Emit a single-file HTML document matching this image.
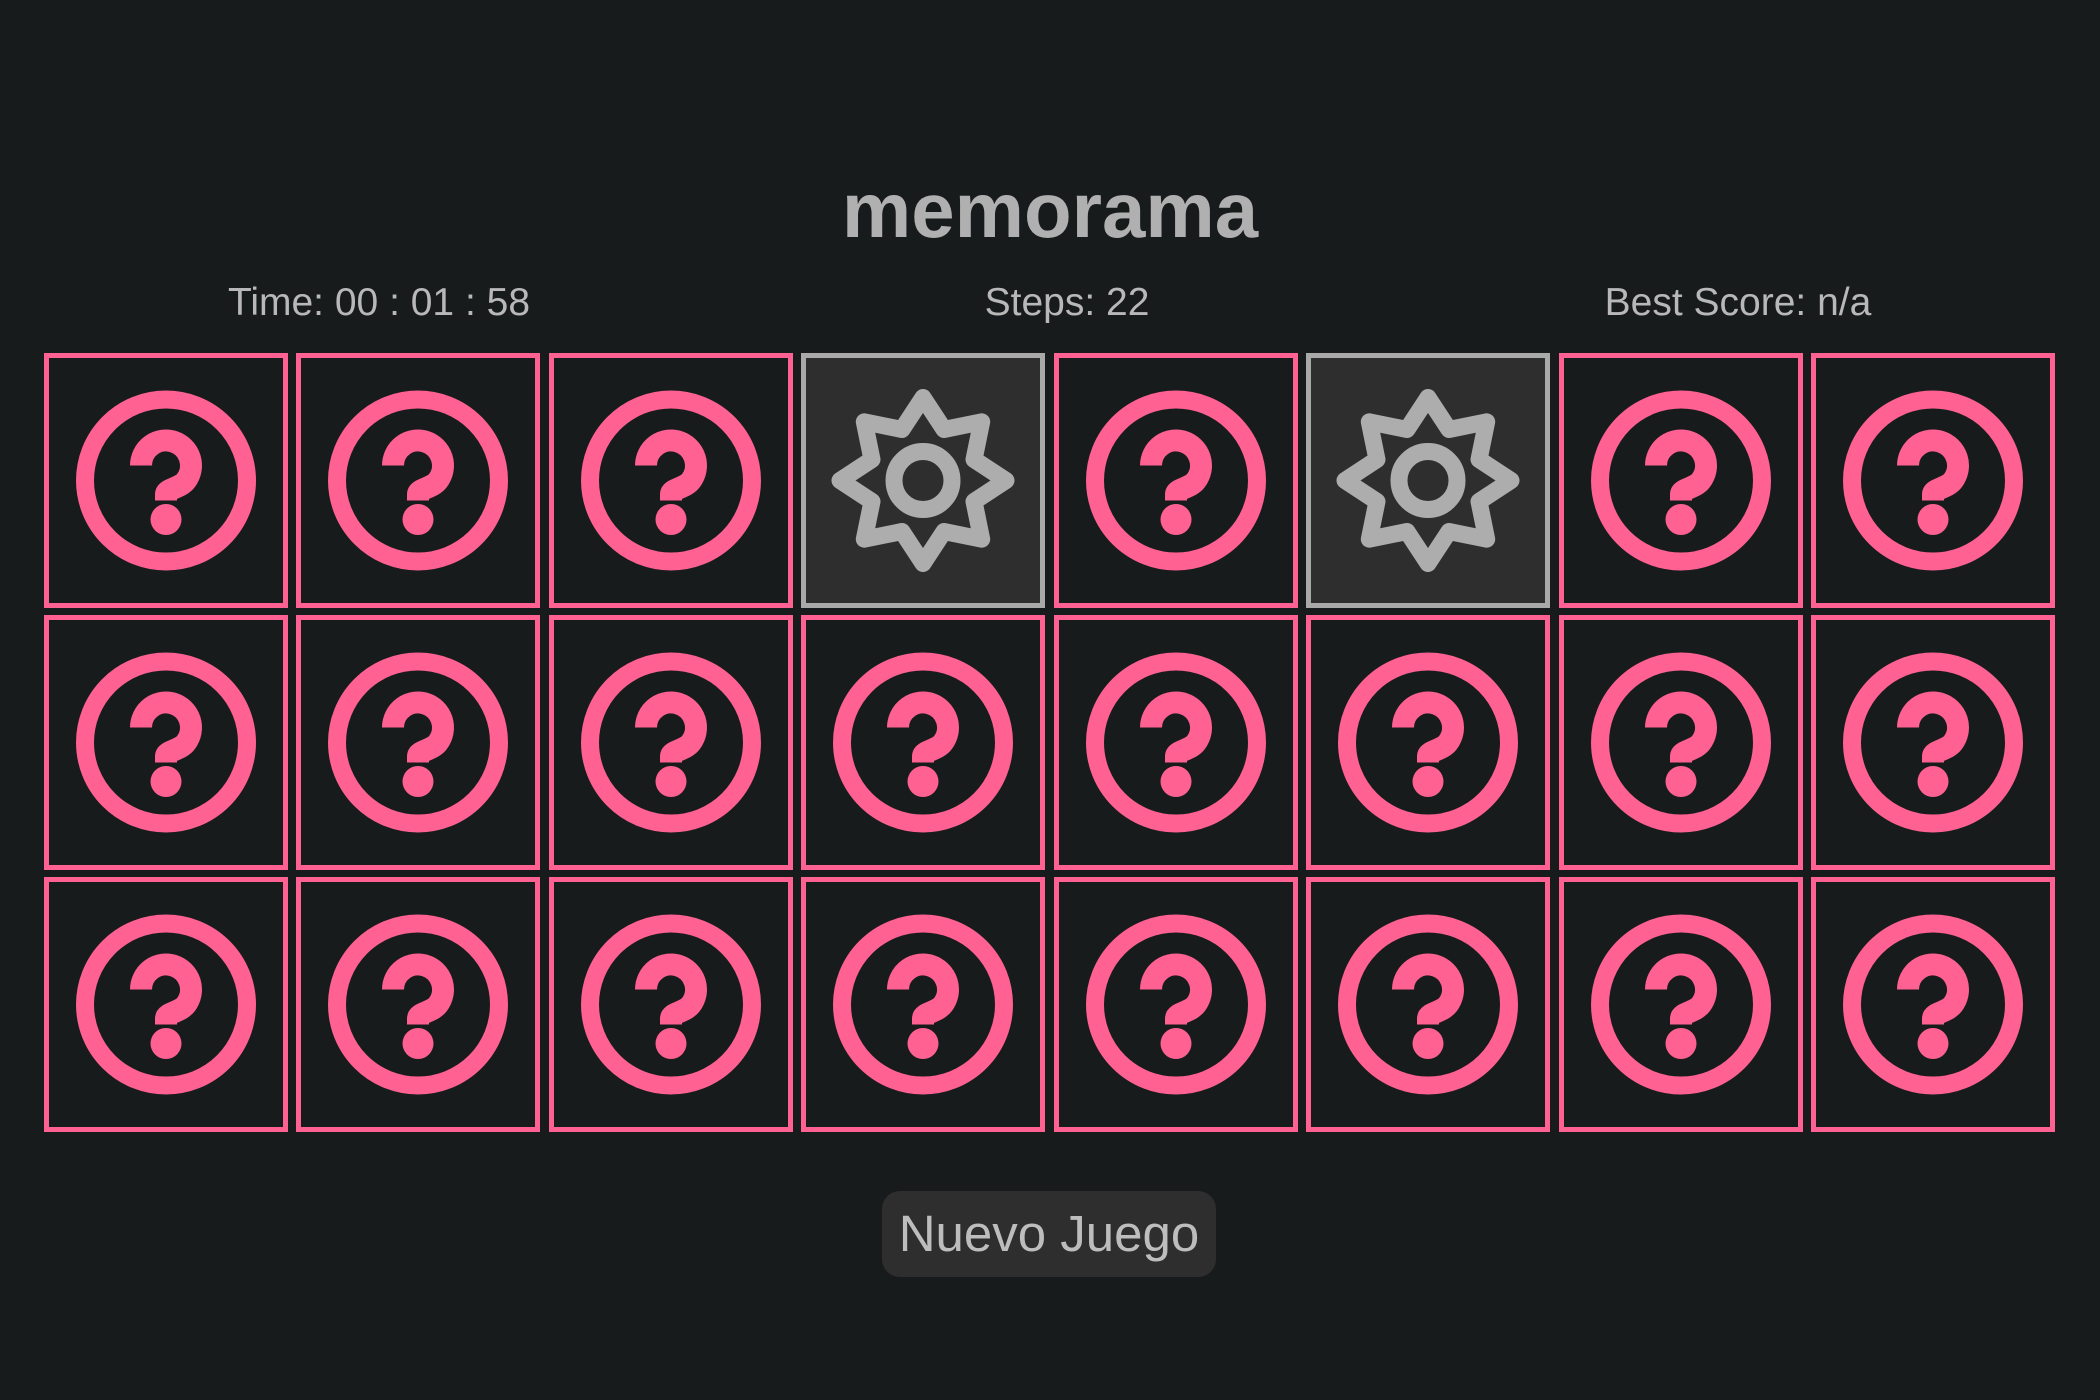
<!DOCTYPE html>
<html><head><meta charset="utf-8"><style>
html,body{margin:0;padding:0;background:#181b1c;width:2100px;height:1400px;overflow:hidden;font-family:"Liberation Sans",Arial,sans-serif;}
h1{position:absolute;left:0;width:2100px;top:160px;margin:0;text-align:center;font-size:78px;font-weight:bold;color:#b0b0b0;line-height:100px;}
.st{position:absolute;top:280px;font-size:39px;color:#b8b8b8;line-height:46px;width:600px;text-align:center;}
.card{position:absolute;width:244px;height:255px;box-sizing:border-box;border:5px solid #ff6192;background:#181b1c;}
.card svg{position:absolute;left:-5px;top:-5px;}
.card.open{border-color:#a9a9a9;background:#2e2e2e;}
.btn{position:absolute;left:882px;top:1191px;width:334px;height:86px;border-radius:18px;background:#2e2e2e;color:#bdbdbd;font-size:51px;line-height:86px;text-align:center;}
</style></head><body>
<svg width="0" height="0" style="position:absolute">
<defs>
<symbol id="q" viewBox="-122 -127.5 244 255">
<circle cx="0" cy="0" r="81" fill="none" stroke="#ff6192" stroke-width="18"/>
<path d="M-25,-15 A25,25 0 1 1 20,0 C14,8 0,8 0,14 L0,20" fill="none" stroke="#ff6192" stroke-width="22"/>
<circle cx="0" cy="39" r="15.5" fill="#ff6192"/>
</symbol>
<symbol id="g" viewBox="-122 -127.5 244 255">
<polygon points="0,-83 21,-51 58.7,-58.7 51,-21 83,0 51,21 58.7,58.7 21,51 0,83 -21,51 -58.7,58.7 -51,21 -83,0 -51,-21 -58.7,-58.7 -21,-51" fill="none" stroke="#adadad" stroke-width="17" stroke-linejoin="round"/>
<circle cx="0" cy="0" r="29" fill="none" stroke="#adadad" stroke-width="17"/>
</symbol>
</defs></svg>
<h1>memorama</h1>
<div class="st" style="left:79px">Time: 00 : 01 : 58</div>
<div class="st" style="left:767px">Steps: 22</div>
<div class="st" style="left:1438px">Best Score: n/a</div>

<div class="card" style="left:44px;top:353px"><svg width="244" height="255"><use href="#q"/></svg></div>
<div class="card" style="left:296px;top:353px"><svg width="244" height="255"><use href="#q"/></svg></div>
<div class="card" style="left:549px;top:353px"><svg width="244" height="255"><use href="#q"/></svg></div>
<div class="card open" style="left:801px;top:353px"><svg width="244" height="255"><use href="#g"/></svg></div>
<div class="card" style="left:1054px;top:353px"><svg width="244" height="255"><use href="#q"/></svg></div>
<div class="card open" style="left:1306px;top:353px"><svg width="244" height="255"><use href="#g"/></svg></div>
<div class="card" style="left:1559px;top:353px"><svg width="244" height="255"><use href="#q"/></svg></div>
<div class="card" style="left:1811px;top:353px"><svg width="244" height="255"><use href="#q"/></svg></div>

<div class="card" style="left:44px;top:615px"><svg width="244" height="255"><use href="#q"/></svg></div>
<div class="card" style="left:296px;top:615px"><svg width="244" height="255"><use href="#q"/></svg></div>
<div class="card" style="left:549px;top:615px"><svg width="244" height="255"><use href="#q"/></svg></div>
<div class="card" style="left:801px;top:615px"><svg width="244" height="255"><use href="#q"/></svg></div>
<div class="card" style="left:1054px;top:615px"><svg width="244" height="255"><use href="#q"/></svg></div>
<div class="card" style="left:1306px;top:615px"><svg width="244" height="255"><use href="#q"/></svg></div>
<div class="card" style="left:1559px;top:615px"><svg width="244" height="255"><use href="#q"/></svg></div>
<div class="card" style="left:1811px;top:615px"><svg width="244" height="255"><use href="#q"/></svg></div>

<div class="card" style="left:44px;top:877px"><svg width="244" height="255"><use href="#q"/></svg></div>
<div class="card" style="left:296px;top:877px"><svg width="244" height="255"><use href="#q"/></svg></div>
<div class="card" style="left:549px;top:877px"><svg width="244" height="255"><use href="#q"/></svg></div>
<div class="card" style="left:801px;top:877px"><svg width="244" height="255"><use href="#q"/></svg></div>
<div class="card" style="left:1054px;top:877px"><svg width="244" height="255"><use href="#q"/></svg></div>
<div class="card" style="left:1306px;top:877px"><svg width="244" height="255"><use href="#q"/></svg></div>
<div class="card" style="left:1559px;top:877px"><svg width="244" height="255"><use href="#q"/></svg></div>
<div class="card" style="left:1811px;top:877px"><svg width="244" height="255"><use href="#q"/></svg></div>

<div class="btn">Nuevo Juego</div>
</body></html>
